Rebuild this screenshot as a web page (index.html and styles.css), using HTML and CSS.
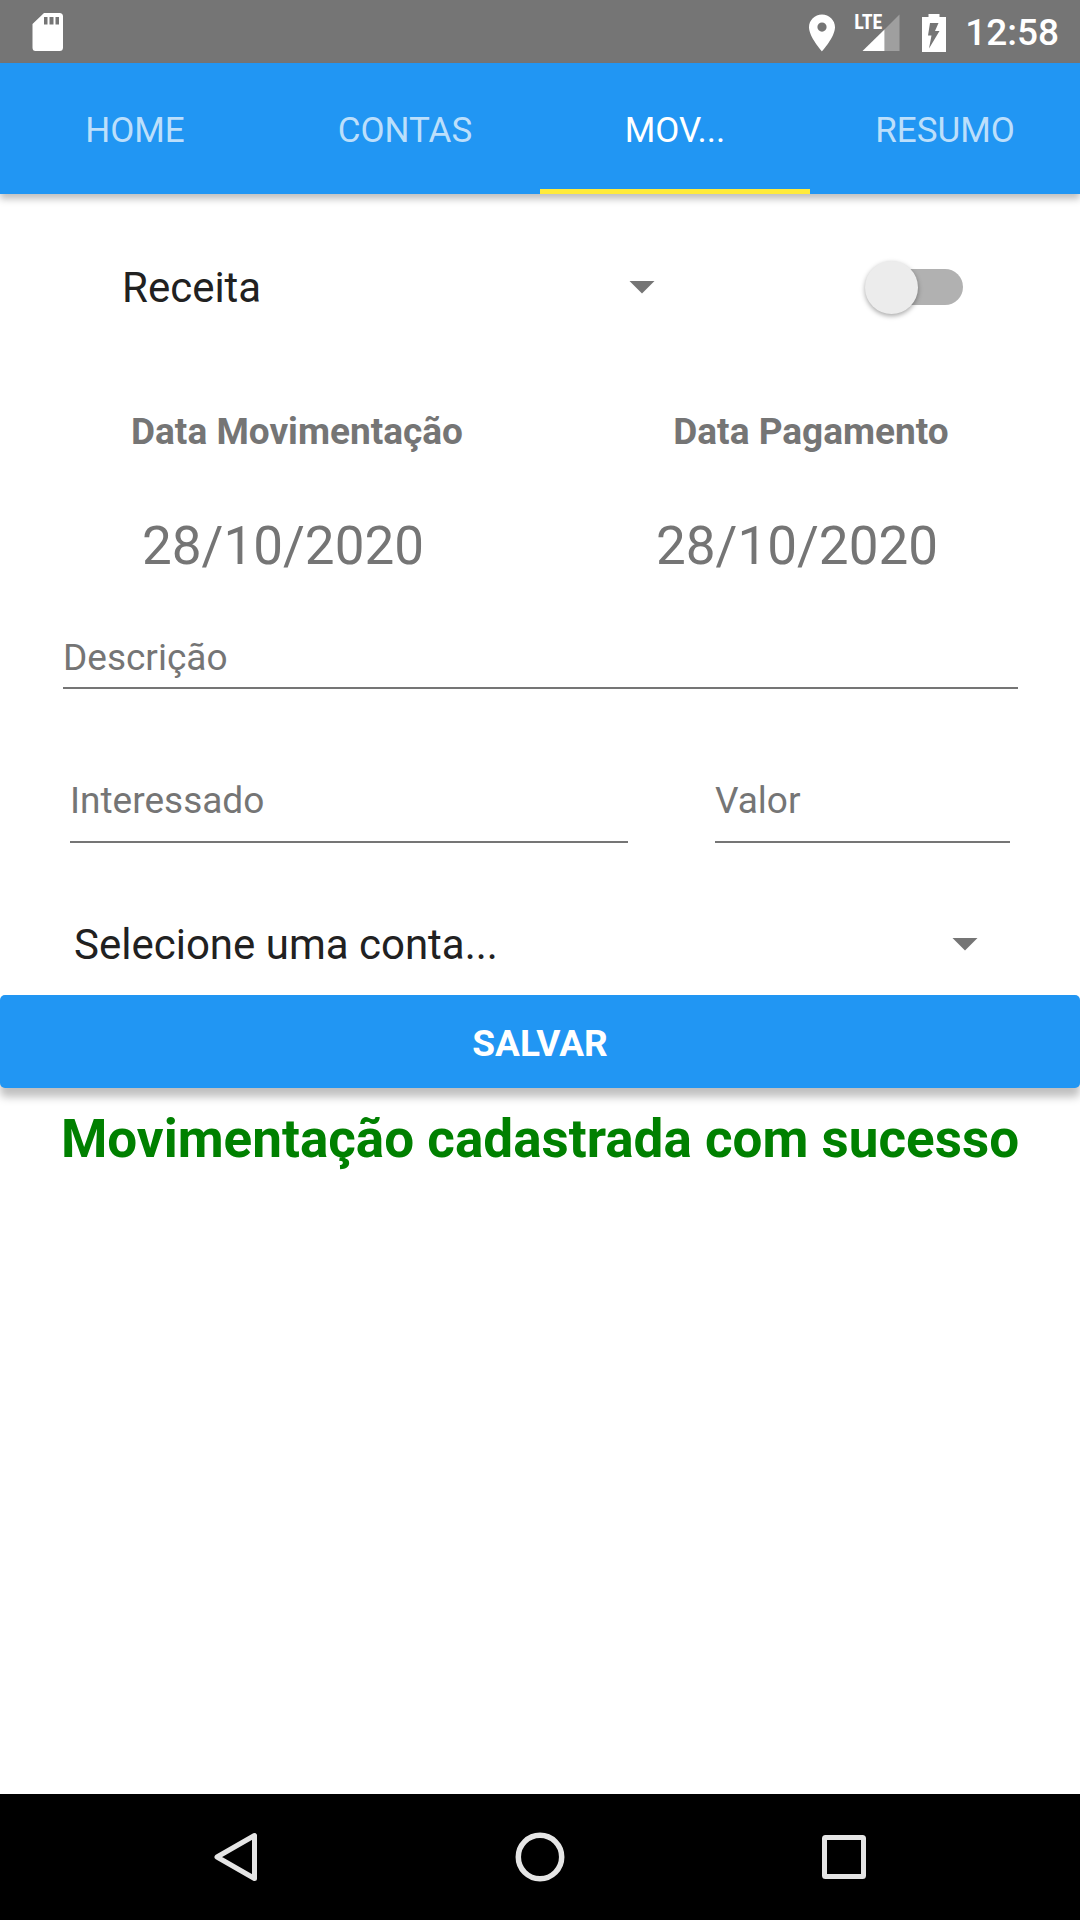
FILE: index.html
```html
<!DOCTYPE html>
<html lang="pt-BR">
<head>
<meta charset="utf-8">
<meta name="viewport" content="width=device-width, initial-scale=1">
<title>Movimentação</title>
<link rel="stylesheet" href="styles.css">
</head>
<body>
<div class="status-bar">
  <svg class="sd-icon" width="32" height="40" viewBox="0 0 32 40" aria-hidden="true">
    <path fill="#fff" fill-rule="evenodd" d="M12 1H27.500Q31 1 31 4.500V35.500Q31 39 27.500 39H3.500Q0.500 39 0.500 35.500V12ZM12 5V12.500H15.500V5ZM17.500 5V12.500H21.500V5ZM23.500 5V12.500H27V5Z"/>
  </svg>
  <div class="status-group">
    <svg width="26" height="38" viewBox="0 0 26 38" aria-hidden="true">
      <path fill="#fff" fill-rule="evenodd" d="M13 0.500C5.800 0.500 0 6.200 0 13.300C0 23 13 37.500 13 37.500S26 23 26 13.300C26 6.200 20.200 0.500 13 0.500ZM13 8.500A4.600 4.600 0 1 1 13 17.700A4.600 4.600 0 1 1 13 8.500Z"/>
    </svg>
    <div class="signal">
      <svg width="49" height="38" viewBox="0 0 49 38" aria-hidden="true">
        <path fill="#9f9f9f" d="M45.500 0.500V37H30.500V15.500Z"/>
        <path fill="#fff" d="M8.500 37L30.500 15.500V37Z"/>
      </svg>
      <span class="signal-type">LTE</span>
    </div>
    <svg width="24" height="38" viewBox="0 0 24 38" aria-hidden="true">
      <path fill="#fff" d="M6.500 0H17.500V3H24V38H0V3H6.500Z"/>
      <path fill="#757575" d="M8 9H16.500L13 17H17.500L7 34.500L9.500 21.500H6Z"/>
    </svg>
    <time class="clock">12:58</time>
  </div>
</div>

<nav class="tabs">
  <a class="tab" href="#home">HOME</a>
  <a class="tab" href="#contas">CONTAS</a>
  <a class="tab tab-active" href="#mov" aria-current="page">MOV...</a>
  <a class="tab" href="#resumo">RESUMO</a>
</nav>

<main class="content">
  <form class="form">
    <div class="type-row">
      <div class="select-box">
        <select class="select" aria-label="Tipo"><option>Receita</option><option>Despesa</option></select>
      </div>
      <input class="switch" type="checkbox" role="switch" aria-label="Pago">
    </div>
    <div class="date-labels">
      <label for="data-mov">Data Movimentação</label>
      <label for="data-pag">Data Pagamento</label>
    </div>
    <div class="date-values">
      <input class="date" id="data-mov" type="text" value="28/10/2020">
      <input class="date" id="data-pag" type="text" value="28/10/2020">
    </div>
    <div class="description-row">
      <input class="field" type="text" placeholder="Descrição" aria-label="Descrição">
    </div>
    <div class="amount-row">
      <input class="field field-tall" type="text" placeholder="Interessado" aria-label="Interessado">
      <input class="field field-tall" type="text" inputmode="decimal" placeholder="Valor" aria-label="Valor">
    </div>
    <div class="account-row">
      <div class="select-box">
        <select class="select" aria-label="Conta"><option>Selecione uma conta...</option></select>
      </div>
    </div>
    <button class="save" type="button">SALVAR</button>
  </form>
  <p class="message" role="status">Movimentação cadastrada com sucesso</p>
</main>

<div class="nav-bar">
  <button class="nav-button" type="button" aria-label="Voltar">
    <svg width="50" height="50" viewBox="0 0 50 50"><path d="M43.500 3.500V46.500L6 25Z" fill="none" stroke="#e5e5e5" stroke-width="5" stroke-linejoin="round"/></svg>
  </button>
  <button class="nav-button" type="button" aria-label="Início">
    <svg width="50" height="50" viewBox="0 0 50 50"><circle cx="25" cy="25" r="21.700" fill="none" stroke="#e5e5e5" stroke-width="5.500"/></svg>
  </button>
  <button class="nav-button" type="button" aria-label="Recentes">
    <svg width="50" height="50" viewBox="0 0 50 50"><rect x="5.500" y="5.500" width="39" height="39" rx="1" fill="none" stroke="#e5e5e5" stroke-width="5" stroke-linejoin="round"/></svg>
  </button>
</div>
</body>
</html>
```
FILE: styles.css
```css
* {
  box-sizing: border-box;
}

body {
  margin: 0;
  min-height: 100vh;
  display: flex;
  flex-direction: column;
  background: #fff;
  color: #757575;
  font-family: Roboto, "Noto Sans", sans-serif;
  font-size: 37px;
  line-height: 44px;
}

input,
select,
button {
  margin: 0;
  padding: 0;
  border: 0;
  border-radius: 0;
  background: none;
  color: inherit;
  font: inherit;
  appearance: none;
}

svg {
  display: block;
}

/* Status bar */

.status-bar {
  display: flex;
  align-items: center;
  justify-content: space-between;
  height: 63px;
  padding: 0 21px 0 32px;
  background: #757575;
  color: #fff;
}

.status-group {
  display: flex;
  align-items: center;
  gap: 19px;
  padding-top: 2px;
}

.signal {
  position: relative;
}

.signal-type {
  position: absolute;
  top: 0;
  left: 0;
  font-family: "Liberation Sans Narrow", "Roboto Condensed", Roboto, sans-serif;
  font-size: 20px;
  font-weight: 700;
  line-height: 16px;
}

.clock {
  font-weight: 500;
}

/* Tabs */

.tabs {
  display: grid;
  grid-template-columns: repeat(4, 1fr);
  height: 131px;
  background: #2196f3;
  box-shadow: 0 5px 7px rgba(0, 0, 0, 0.25);
  font-size: 35px;
}

.tab {
  display: flex;
  align-items: center;
  justify-content: center;
  padding-top: 9px;
  border-bottom: 5px solid transparent;
  color: #bcdffb;
  text-decoration: none;
}

.tab-active {
  border-color: #ffeb3b;
  color: #fff;
}

/* Form */

.content {
  flex: 1;
  padding-top: 64px;
}

.type-row {
  display: grid;
  grid-template-columns: 533fr 308fr;
  align-items: center;
  padding: 0 117px 0 122px;
}

.select-box {
  display: grid;
  align-items: center;
}

.select {
  grid-area: 1 / 1;
  width: 100%;
  height: 60px;
  color: #212121;
  font-size: 42px;
  line-height: 60px;
}

.select-box::after {
  content: "";
  grid-area: 1 / 1;
  justify-self: end;
  width: 26px;
  height: 13px;
  margin-bottom: 2px;
  background: #757575;
  clip-path: polygon(0 0, 100% 0, 50% 100%);
  pointer-events: none;
}

.switch {
  display: flex;
  align-items: center;
  justify-self: end;
  width: 84px;
  height: 36px;
  margin-bottom: 2px;
  border-radius: 18px;
  background: #b1b1b1;
}

.switch::before {
  content: "";
  flex: none;
  width: 53px;
  height: 53px;
  margin-left: -14px;
  border-radius: 50%;
  background: #ececec;
  box-shadow: 0 2px 5px rgba(0, 0, 0, 0.35);
}

.switch:checked::before {
  margin-left: 45px;
}

.date-labels,
.date-values {
  display: grid;
  grid-template-columns: repeat(2, 1fr);
  text-align: center;
}

.date-labels {
  padding: 92px 12px 0 40px;
  font-weight: 700;
}

.date-values {
  padding: 61px 26px 0;
}

.date {
  width: 100%;
  height: 62px;
  font-size: 53px;
  line-height: 62px;
  text-align: center;
}

.description-row {
  padding: 58px 62px 0 63px;
}

.field {
  display: block;
  width: 100%;
  height: 54px;
  padding-bottom: 8px;
  border-bottom: 2px solid #757575;
}

.field-tall {
  height: 65px;
  padding-bottom: 19px;
}

.field::placeholder {
  color: #757575;
  opacity: 1;
}

.amount-row {
  display: grid;
  grid-template-columns: 558fr 295fr;
  gap: 87px;
  padding: 89px 70px 0;
}

.account-row {
  padding: 72px 102px 20px 74px;
}

.save {
  display: block;
  width: 100%;
  height: 93px;
  padding-top: 4px;
  border-radius: 5px;
  background: #2196f3;
  box-shadow: 0 9px 9px rgba(0, 0, 0, 0.25);
  color: #fff;
  font-weight: 700;
}

.message {
  margin: 20px 0;
  color: #008000;
  font-size: 53px;
  font-weight: 700;
  line-height: 62px;
  text-align: center;
}

/* System navigation */

.nav-bar {
  display: flex;
  justify-content: center;
  height: 126px;
  background: #000;
}

.nav-button {
  display: flex;
  align-items: center;
  justify-content: center;
  width: 304px;
}
```
